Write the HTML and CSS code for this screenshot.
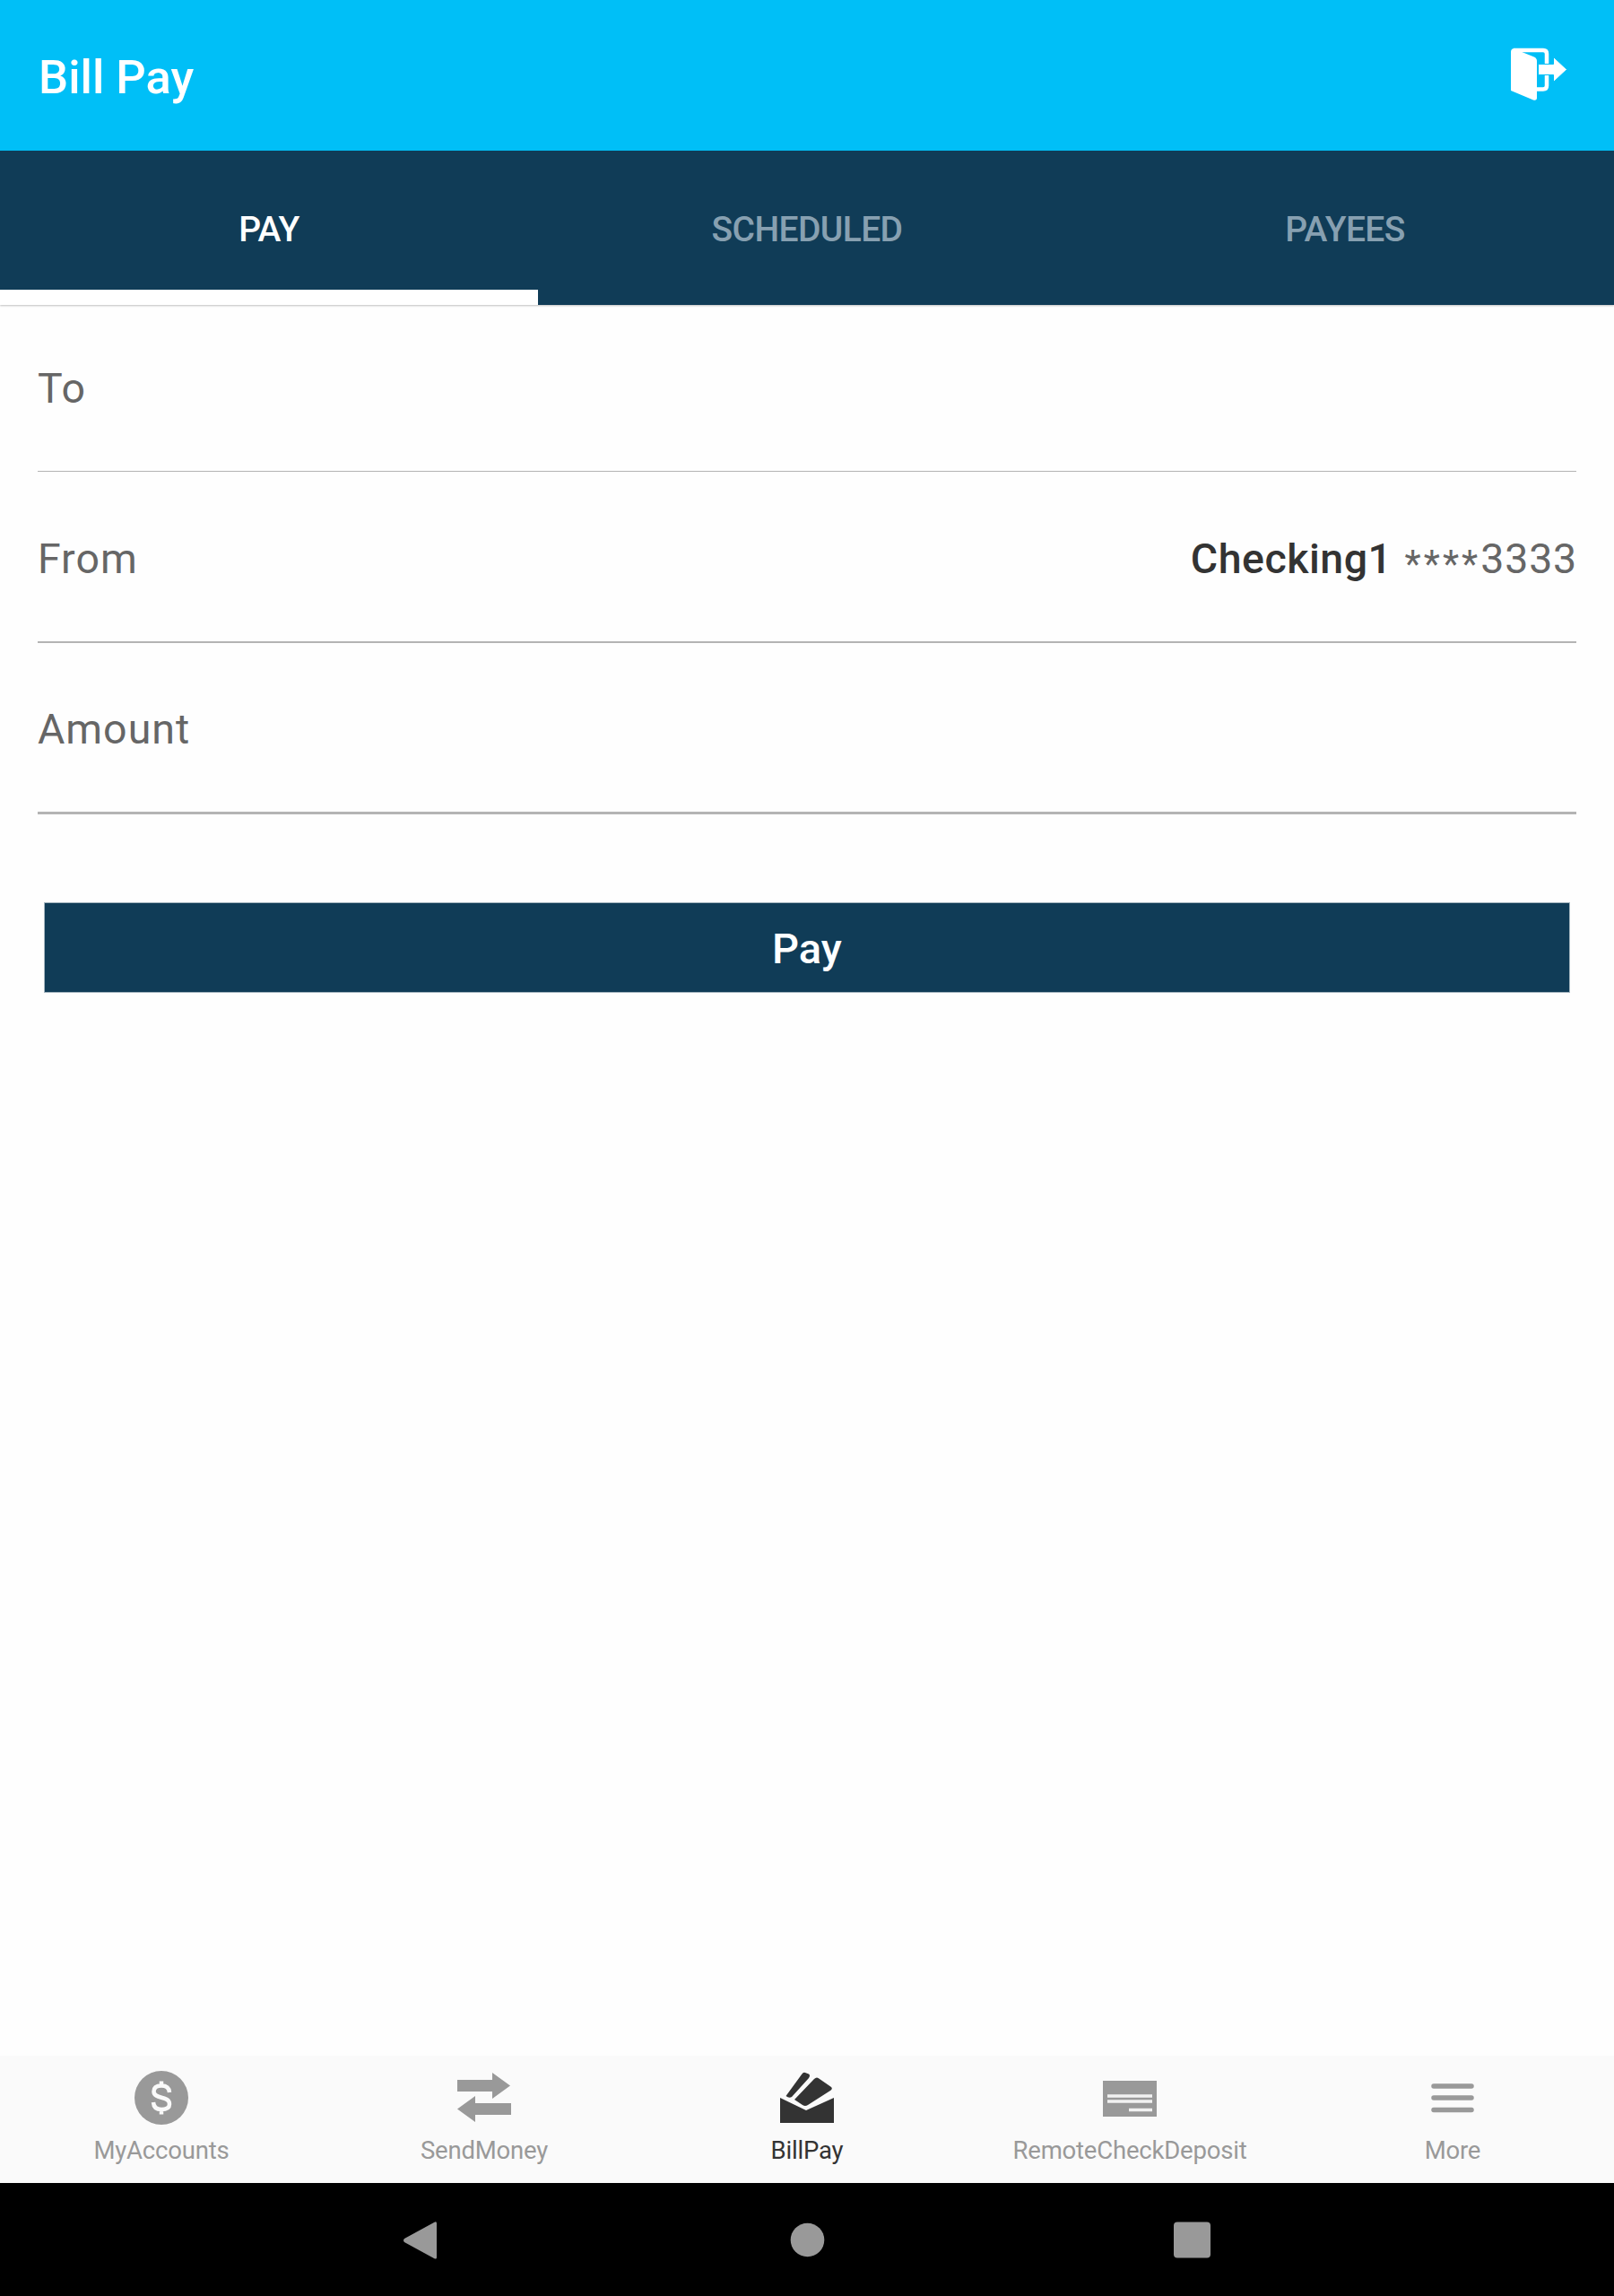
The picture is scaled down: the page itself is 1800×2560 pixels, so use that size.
FILE: index.html
```html
<!DOCTYPE html>
<html lang="en">
<head>
<meta charset="utf-8">
<title>Bill Pay</title>
<link rel="stylesheet" href="styles.css">
</head>
<body>
<header class="header">
  <h1 class="title">Bill Pay</h1>
  <svg class="exit" viewBox="0 0 64 60" width="64" height="60">
    <path d="M4 4H37Q41 4 41 8V43.500Q41 47.500 37 47.500H28" fill="none" stroke="#fff" stroke-width="4.500"/>
    <path d="M1 6Q1 2 5 2L12 5.500L27 11.500Q30 13 30 16V57Q30 60.500 26 59.500L1 49Z" fill="#fff"/>
    <path d="M31.500 19.500H48.500V11.500L63.500 25.500L48.500 39.500V31.500H31.500Z" fill="#fff" stroke="#00bff7" stroke-width="1"/>
  </svg>
</header>
<nav class="tabs">
  <a class="tab active"><span>PAY</span></a>
  <a class="tab"><span>SCHEDULED</span></a>
  <a class="tab"><span>PAYEES</span></a>
</nav>
<main class="form">
  <div class="row first"><label class="label">To</label></div>
  <div class="row second"><label class="label">From</label><div class="account"><b>Checking1</b><span><span class="mask">****</span>3333</span></div></div>
  <div class="row third"><label class="label">Amount</label></div>
  <button class="pay">Pay</button>
</main>
<nav class="bottom">
  <a class="item">
    <svg viewBox="0 0 64 64" width="64" height="64"><circle cx="32" cy="32" r="30" fill="#999"/><path d="M41 26Q40.500 18.500 32 18.500Q23.500 18.500 23.500 25C23.500 34 41 29.500 41 39Q41 45 32 45Q23.500 45 23 37M32 13.500V19M32 45V50.500" fill="none" stroke="#fafafa" stroke-width="4.500"/></svg>
    <span>MyAccounts</span>
  </a>
  <a class="item">
    <svg viewBox="0 0 64 64" width="64" height="64"><path d="M2 12H41V4L61 18.500L41 33V25H2ZM62 38H22V30L2 44.500L22 59V51H62Z" fill="#999"/></svg>
    <span>SendMoney</span>
  </a>
  <a class="item current">
    <svg viewBox="0 0 64 64" width="64" height="64"><path d="M2 32L31 46L62 32V60H2ZM8.500 30L26 6Q28 3 30 4L34 5.500Q36 7 34 10L15 31Q12 33 8.500 30ZM18 34L40 11Q43 8 46 11L59 20Q61 22 58 24L33 40Q30 42 27 40Z" fill="#333"/></svg>
    <span>BillPay</span>
  </a>
  <a class="item">
    <svg viewBox="0 0 64 64" width="64" height="64"><path d="M2 13H62V53H2Z" fill="#999"/><path d="M7 30H57M7 36H57M31 45.500H57" fill="none" stroke="#f1f1f1" stroke-width="3.500"/></svg>
    <span>RemoteCheckDeposit</span>
  </a>
  <a class="item">
    <svg viewBox="0 0 64 64" width="64" height="64"><path d="M11 19H53M11 32H53M11 45.500H53" stroke="#999" stroke-width="5.500" stroke-linecap="round"/></svg>
    <span>More</span>
  </a>
</nav>
<footer class="system">
  <svg viewBox="0 0 960 126" width="960" height="126">
    <path d="M31 62Q29 64 31 66L64 84Q67 85.500 67 83V45Q67 42 64 44Z" fill="#999"/>
    <circle cx="480.500" cy="63.500" r="18.800" fill="#999"/>
    <rect x="889" y="43.500" width="41" height="40" rx="4" fill="#999"/>
  </svg>
</footer>
</body>
</html>
```
FILE: styles.css
```css
* { box-sizing: border-box; }
body { margin: 0; width: 1800px; height: 2560px; display: flex; flex-direction: column; background: #fefefe; font-family: Roboto, sans-serif; overflow: hidden; }
.header { height: 168px; background: #00bff7; display: flex; align-items: center; justify-content: space-between; padding: 0 52px 4px 43px; }
.title { margin: 0; padding-top: 7px; font-size: 52.5px; line-height: 62px; font-weight: 500; color: #fff; }
.exit { display: block; }
.tabs { height: 172px; background: #103c57; display: grid; grid-template-columns: repeat(3, 1fr); box-shadow: 0 1px 2px #00000040; }
.tab { display: flex; align-items: center; justify-content: center; padding-top: 20px; font-size: 39px; line-height: 46px; font-weight: 500; letter-spacing: -0.6px; color: #87a0b1; border-bottom: 17px solid transparent; }
.tab.active { color: #fff; border-bottom-color: #fff; }
.form { flex: 1; padding: 0 42px; }
.row { display: flex; justify-content: space-between; align-items: center; height: 191px; font-size: 46.5px; line-height: 60px; border-bottom: 2px solid #b4b4b4; }
.first { height: 186px; border-bottom-width: 1px; }
.second { padding-top: 4px; }
.third { padding-top: 4px; border-bottom-width: 3px; }
.label { color: #666; letter-spacing: 1px; }
.account { display: flex; gap: 14px; margin-right: -1px; color: #666; letter-spacing: 0.8px; }
.account b { font-weight: 500; color: #333; letter-spacing: 0.5px; }
.mask { font-size: 42px; letter-spacing: 3.1px; line-height: 1; vertical-align: -4px; }
.pay { display: block; width: calc(100% - 16px); height: 99px; margin: 99px 8px 0; padding: 3px 0 0; border: 0; background: #103c57; color: #fff; font: 500 47px/56px Roboto, sans-serif; box-shadow: 0 0 0 1px #103c5760; }
.bottom { height: 142px; background: #fafafa; display: grid; grid-template-columns: repeat(5, 1fr); }
.item { display: flex; flex-direction: column; align-items: center; padding-top: 15px; color: #999; font-size: 27.5px; line-height: 34px; letter-spacing: -0.2px; gap: 10px; }
.item svg { display: block; }
.current { color: #333; }
.system { height: 126px; background: #000; display: flex; justify-content: center; }
```
